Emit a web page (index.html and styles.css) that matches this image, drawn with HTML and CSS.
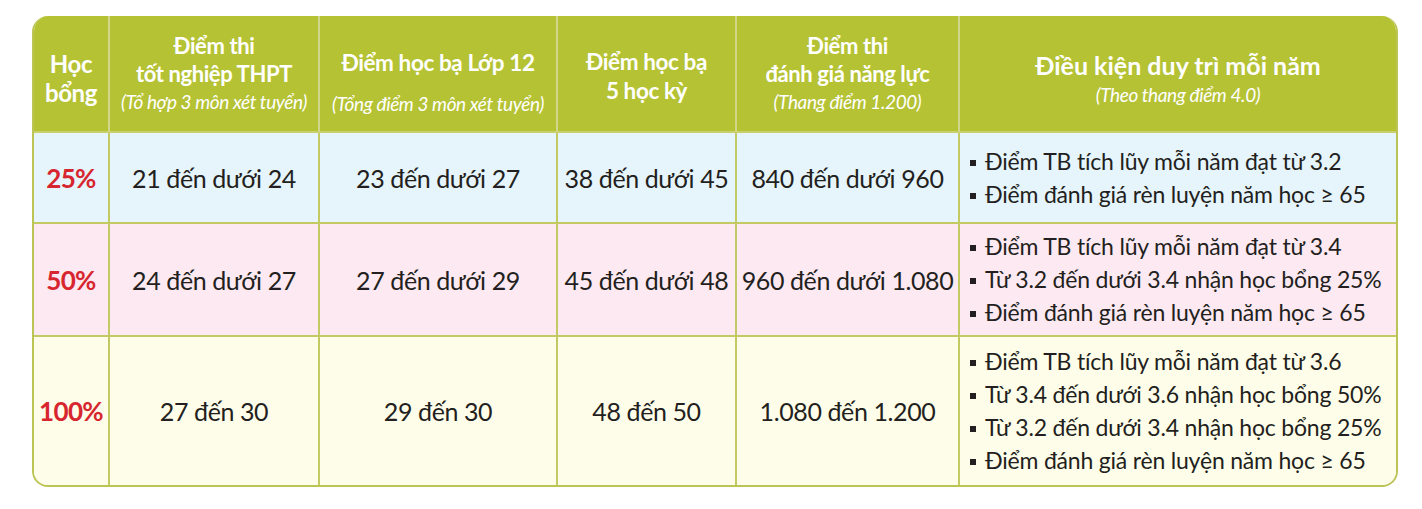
FILE: index.html
```html
<!DOCTYPE html>
<html lang="vi">
<head>
<meta charset="utf-8">
<title>Học bổng</title>
<link rel="stylesheet" href="styles.css">
</head>
<body>
<div class="sheet">
  <div class="grid">
    <div class="cell head c1"><div class="ht big">Học<br>bổng</div></div>
    <div class="cell head"><div class="ht">Điểm thi<br>tốt nghiệp THPT</div><div class="hs">(Tổ hợp 3 môn xét tuyển)</div></div>
    <div class="cell head c3"><div class="ht mid">Điểm học bạ Lớp 12</div><div class="hs gap">(Tổng điểm 3 môn xét tuyển)</div></div>
    <div class="cell head c4"><div class="ht mid">Điểm học bạ<br>5 học kỳ</div></div>
    <div class="cell head"><div class="ht">Điểm thi<br>đánh giá năng lực</div><div class="hs">(Thang điểm 1.200)</div></div>
    <div class="cell head last"><div class="ht wide">Điều kiện duy trì mỗi năm</div><div class="hs">(Theo thang điểm 4.0)</div></div>

    <div class="cell r1 pct">25%</div>
    <div class="cell r1 val">21 đến dưới 24</div>
    <div class="cell r1 val">23 đến dưới 27</div>
    <div class="cell r1 val">38 đến dưới 45</div>
    <div class="cell r1 val">840 đến dưới 960</div>
    <div class="cell r1 last cond">
      <ul class="list">
        <li>Điểm TB tích lũy mỗi năm đạt từ 3.2</li>
        <li>Điểm đánh giá rèn luyện năm học ≥ 65</li>
      </ul>
    </div>

    <div class="cell r2 pct">50%</div>
    <div class="cell r2 val">24 đến dưới 27</div>
    <div class="cell r2 val">27 đến dưới 29</div>
    <div class="cell r2 val">45 đến dưới 48</div>
    <div class="cell r2 val">960 đến dưới 1.080</div>
    <div class="cell r2 last cond">
      <ul class="list">
        <li>Điểm TB tích lũy mỗi năm đạt từ 3.4</li>
        <li>Từ 3.2 đến dưới 3.4 nhận học bổng 25%</li>
        <li>Điểm đánh giá rèn luyện năm học ≥ 65</li>
      </ul>
    </div>

    <div class="cell r3 pct bottom">100%</div>
    <div class="cell r3 val bottom">27 đến 30</div>
    <div class="cell r3 val bottom">29 đến 30</div>
    <div class="cell r3 val bottom">48 đến 50</div>
    <div class="cell r3 val bottom">1.080 đến 1.200</div>
    <div class="cell r3 last cond bottom">
      <ul class="list">
        <li>Điểm TB tích lũy mỗi năm đạt từ 3.6</li>
        <li>Từ 3.4 đến dưới 3.6 nhận học bổng 50%</li>
        <li>Từ 3.2 đến dưới 3.4 nhận học bổng 25%</li>
        <li>Điểm đánh giá rèn luyện năm học ≥ 65</li>
      </ul>
    </div>
  </div>
</div>
</body>
</html>
```
FILE: styles.css
```css
html, body {
  margin: 0;
  padding: 0;
  background: #ffffff;
}
body {
  font-family: "Lato", "Noto Sans", sans-serif;
  color: #231f20;
}
.sheet {
  padding: 16px 0 0 32px;
}
.grid {
  display: grid;
  width: 1366px;
  box-sizing: border-box;
  grid-template-columns: 76px 210px 238px 179px 223px 1fr;
  grid-template-rows: 117px 91px 113px 148px;
  border: 2px solid #bcc455;
  border-top: none;
  border-radius: 16px;
  overflow: hidden;
}
.cell {
  box-sizing: border-box;
  border-right: 2px solid #c3c963;
  border-bottom: 2px solid #c3c963;
  display: flex;
  flex-direction: column;
  align-items: center;
  justify-content: center;
  text-align: center;
}
.cell.last { border-right: none; }
.cell.bottom { border-bottom: none; }
.head {
  background: #b5c234;
  color: #ffffff;
  border-right: 2px solid #d0d68a;
  border-bottom: 2px solid #c8cf6c;
  padding-top: 0;
}
.head.last { border-right: none; }
.head.c3 { padding-top: 18px; }
.head.c4 { padding-top: 5px; }
.ht {
  font-weight: 700;
  font-size: 22px;
  line-height: 28px;
  letter-spacing: -0.4px;
}
.ht.big {
  font-size: 24px;
  line-height: 29px;
  padding-top: 8px;
}
.ht.mid {
  font-size: 22.5px;
  line-height: 29px;
}
.hs {
  font-style: italic;
  font-weight: 400;
  font-size: 19px;
  line-height: 27px;
  letter-spacing: -0.4px;
}
.ht.wide {
  font-size: 25px;
  line-height: 28px;
  padding-top: 12px;
  letter-spacing: 0;
}
.ht.wide + .hs { margin-top: 2px; }
.hs.gap { margin-top: 13px; }
.r1 { background: #e6f4fb; }
.r2 { background: #fde9f1; }
.r3 { background: #fefde9; }
.pct {
  color: #d7262f;
  font-weight: 700;
  font-size: 26px;
  letter-spacing: -0.6px;
}
.val {
  font-size: 25px;
  letter-spacing: -0.4px;
}
.cond {
  align-items: flex-start;
  padding-left: 10px;
}
.list {
  list-style: none;
  margin: 0;
  padding: 0;
  text-align: left;
}
.list li {
  font-size: 23px;
  line-height: 33px;
  letter-spacing: -0.2px;
  display: flex;
  align-items: center;
}
.list li::before {
  content: "";
  width: 6px;
  height: 6px;
  background: #231f20;
  margin-right: 9px;
  margin-top: 3px;
  flex: none;
}
```
